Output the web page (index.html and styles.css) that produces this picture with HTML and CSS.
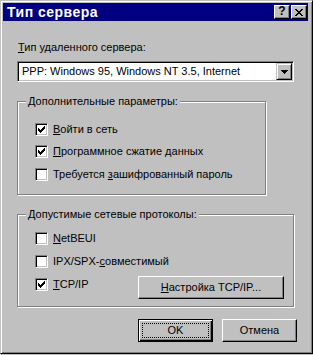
FILE: index.html
```html
<!DOCTYPE html>
<html lang="ru">
<head>
  <meta charset="UTF-8">
  <title>Тип сервера</title>
  <link rel="stylesheet" href="styles.css">
</head>
<body>
  <div class="window">
    <!-- заголовок окна -->
    <div class="titlebar">
      <span class="title">Тип сервера</span>
      <div class="title-buttons">
        <span class="tbtn help">?</span>
        <span class="tbtn">
          <svg width="8" height="7" viewBox="0 0 8 7"><path d="M0 0h2v1h-2zM6 0h2v1h-2zM1 1h2v1h-2zM5 1h2v1h-2zM2 2h4v1h-4zM3 3h2v1h-2zM2 4h4v1h-4zM1 5h2v1h-2zM5 5h2v1h-2zM0 6h2v1h-2zM6 6h2v1h-2z" fill="#000"/></svg>
        </span>
      </div>
    </div>

    <div class="content">
      <div class="field-label"><u>Т</u>ип удаленного сервера:</div>
      <div class="combo">
        <span class="combo-text">PPP: Windows 95, Windows NT 3.5, Internet</span>
        <span class="combo-btn">
          <svg width="7" height="4" viewBox="0 0 7 4"><path d="M0 0h7v1h-1v1h-1v1h-1v1h-1v-1h-1v-1h-1v-1h-1z" fill="#000"/></svg>
        </span>
      </div>

      <!-- дополнительные параметры -->
      <fieldset class="group group-options">
        <legend>Дополнительные параметры:</legend>
        <div class="check first">
          <span class="box"><svg width="7" height="7" viewBox="0 0 7 7"><path d="M0 2h1v3h-1zM1 3h1v3h-1zM2 4h1v3h-1zM3 3h1v3h-1zM4 2h1v3h-1zM5 1h1v3h-1zM6 0h1v3h-1z" fill="#000"/></svg></span>
          <span><u>В</u>ойти в сеть</span>
        </div>
        <div class="check second">
          <span class="box"><svg width="7" height="7" viewBox="0 0 7 7"><path d="M0 2h1v3h-1zM1 3h1v3h-1zM2 4h1v3h-1zM3 3h1v3h-1zM4 2h1v3h-1zM5 1h1v3h-1zM6 0h1v3h-1z" fill="#000"/></svg></span>
          <span><u>П</u>рограммное сжатие данных</span>
        </div>
        <div class="check third">
          <span class="box"></span>
          <span>Требуется <u>з</u>ашифрованный пароль</span>
        </div>
      </fieldset>

      <!-- сетевые протоколы -->
      <fieldset class="group group-protocols">
        <legend>Допустимые сетевые протоколы:</legend>
        <div class="check first">
          <span class="box"></span>
          <span><u>N</u>etBEUI</span>
        </div>
        <div class="check second">
          <span class="box"></span>
          <span>IPX/SPX-<u>с</u>овместимый</span>
        </div>
        <div class="check-row">
          <div class="check">
            <span class="box"><svg width="7" height="7" viewBox="0 0 7 7"><path d="M0 2h1v3h-1zM1 3h1v3h-1zM2 4h1v3h-1zM3 3h1v3h-1zM4 2h1v3h-1zM5 1h1v3h-1zM6 0h1v3h-1z" fill="#000"/></svg></span>
            <span><u>T</u>CP/IP</span>
          </div>
          <button class="btn btn-wide"><u>Н</u>астройка TCP/IP...</button>
        </div>
      </fieldset>

      <div class="actions">
        <button class="btn btn-default"><span class="focus">OK</span></button>
        <button class="btn">Отмена</button>
      </div>
    </div>
  </div>
</body>
</html>
```

FILE: styles.css
```css
* {
  box-sizing: border-box;
}
body {
  margin: 0;
  background: #c0c0c0;
  font-family: "Liberation Sans", Arial, sans-serif;
  font-size: 11px;
  line-height: 13px;
  color: #000;
}
u {
  text-decoration: underline;
  text-underline-offset: 1px;
}
/* рамка окна */
.window {
  width: 313px;
  height: 354px;
  padding: 2px;
  background: #c0c0c0;
  border: 1px solid;
  border-color: #c0c0c0 #000 #000 #c0c0c0;
  box-shadow: inset 1px 1px #fff, inset -1px -1px #808080;
}
.titlebar {
  display: flex;
  align-items: center;
  justify-content: space-between;
  height: 18px;
  margin-right: 2px;
  padding: 0 1px 0 4px;
  background: #000080;
  color: #fff;
}
.title {
  font-size: 14px;
  font-weight: bold;
  letter-spacing: 0.5px;
  line-height: 18px;
}
.title-buttons {
  display: flex;
  gap: 1px;
}
.tbtn {
  display: flex;
  align-items: center;
  justify-content: center;
  width: 16px;
  height: 14px;
  background: #c0c0c0;
  color: #000;
  border: 1px solid;
  border-color: #fff #000 #000 #fff;
  box-shadow: inset -1px -1px #808080;
}
.tbtn.help {
  font-weight: bold;
  font-size: 12px;
  padding-bottom: 1px;
}
/* содержимое */
.content {
  padding-left: 14px;
}
.field-label {
  margin-top: 20px;
  padding-left: 1px;
}
.combo {
  display: flex;
  align-items: center;
  width: 277px;
  height: 21px;
  margin-top: 7px;
  padding: 1px;
  background: #fff;
  border: 1px solid;
  border-color: #808080 #fff #fff #808080;
  box-shadow: inset 1px 1px #000, inset -1px -1px #c0c0c0;
}
.combo-text {
  flex: 1;
  padding: 0 0 0 3px;
}
.combo-btn {
  display: flex;
  align-items: center;
  justify-content: center;
  width: 16px;
  height: 17px;
  background: #c0c0c0;
  border: 1px solid;
  border-color: #c0c0c0 #000 #000 #c0c0c0;
  box-shadow: inset 1px 1px #fff, inset -1px -1px #808080;
}
/* группы */
.group {
  margin: 13px 0 0;
  padding: 0;
  min-width: 0;
  border: 1px solid #808080;
  box-shadow: inset 1px 1px #fff, 1px 1px #fff;
}
.group legend {
  margin-left: 8px;
  padding: 0 2px;
  background: #c0c0c0;
  line-height: 13px;
}
.group-options {
  width: 249px;
  padding-bottom: 13px;
}
.group-protocols {
  width: 277px;
  padding-bottom: 7px;
}
.check {
  display: flex;
  align-items: center;
  gap: 5px;
  height: 13px;
  margin-left: 17px;
}
.group-options .first { margin-top: 15px; }
.group-options .second { margin-top: 9px; }
.group-options .third { margin-top: 10px; }
.group-protocols .first { margin-top: 11px; }
.group-protocols .second { margin-top: 10px; }
.box {
  display: flex;
  align-items: center;
  justify-content: center;
  flex: 0 0 13px;
  width: 13px;
  height: 13px;
  background: #fff;
  border: 1px solid;
  border-color: #808080 #fff #fff #808080;
  box-shadow: inset 1px 1px #000, inset -1px -1px #c0c0c0;
}
.check-row {
  display: flex;
  align-items: flex-start;
  margin-top: 10px;
}
.check-row .check {
  flex: 0 0 103px;
  margin-left: 17px;
}
/* кнопки */
.btn {
  display: flex;
  align-items: center;
  justify-content: center;
  width: 75px;
  height: 23px;
  padding: 0;
  background: #c0c0c0;
  font: inherit;
  color: #000;
  border: 1px solid;
  border-color: #fff #000 #000 #fff;
  box-shadow: inset -1px -1px #808080;
}
.btn-wide {
  width: 146px;
  margin-top: -2px;
}
.btn-default {
  padding: 3px;
  border-color: #000;
  box-shadow: inset 1px 1px #fff, inset -1px -1px #000, inset -2px -2px #808080;
}
.focus {
  display: flex;
  align-items: center;
  justify-content: center;
  width: 100%;
  height: 100%;
  border: 1px dotted #000;
}
.actions {
  display: flex;
  justify-content: flex-end;
  gap: 9px;
  margin-top: 12px;
  padding-right: 13px;
}
```
